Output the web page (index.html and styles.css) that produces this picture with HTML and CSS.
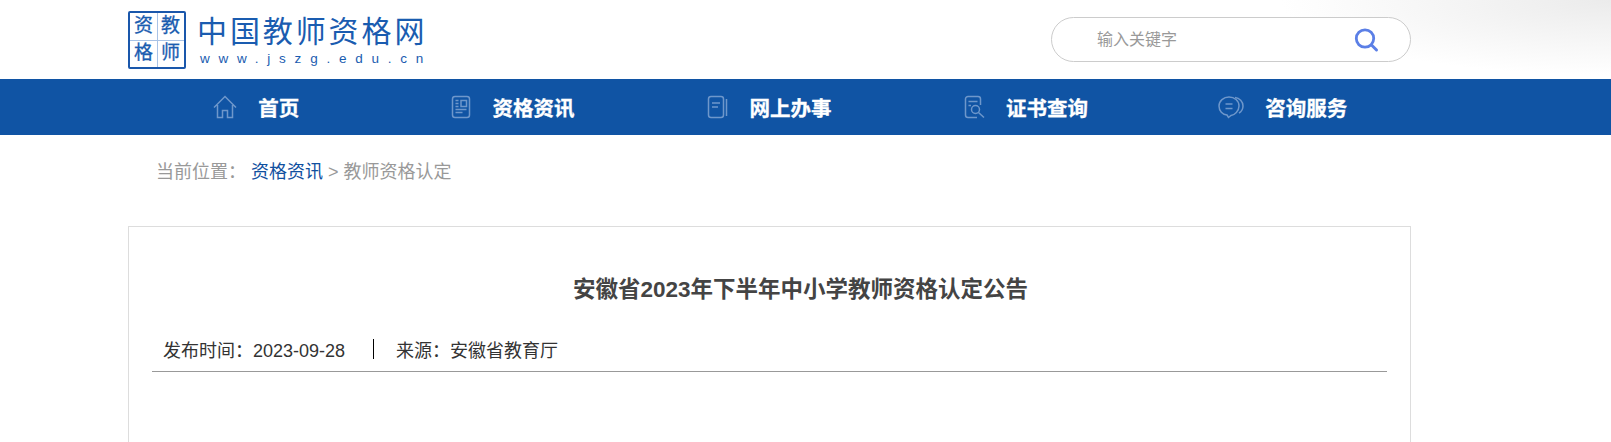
FILE: index.html
```html
<!DOCTYPE html>
<html lang="zh-CN">
<head>
    <meta charset="UTF-8">
    <title>安徽省2023年下半年中小学教师资格认定公告</title>
    <link rel="stylesheet" href="styles.css">
</head>
<body>
    <header class="cabecera">
        <div class="contenedor cabecera-fila">
            <a class="logo" href="#">
                <div class="logo-sello">
                    <span>资</span><span>教</span><span>格</span><span>师</span>
                </div>
                <div class="logo-texto">
                    <div class="logo-nombre">中国教师资格网</div>
                    <div class="logo-url">www.jszg.edu.cn</div>
                </div>
            </a>
            <form class="buscador">
                <input class="buscador-campo" type="text" placeholder="输入关键字">
                <svg class="buscador-icono" width="26" height="26" viewBox="0 0 26 26" fill="none" stroke="#5b7fe6">
                    <circle cx="12" cy="11.5" r="8.7" stroke-width="2.8"/>
                    <path d="M18.5 18l5 5" stroke-width="3" stroke-linecap="round"/>
                </svg>
            </form>
        </div>
    </header>

    <nav class="menu">
        <div class="contenedor menu-fila">
            <a class="menu-item" href="#">
                <svg class="menu-icono" width="24" height="24" viewBox="0 0 24 24">
                    <path d="M1 12.5 12 1.5l11 11M4.500 10v12.500h5V15.500h5v7h5V10"/>
                </svg>
                首页
            </a>
            <a class="menu-item" href="#">
                <svg class="menu-icono" width="20" height="24" viewBox="0 0 20 24">
                    <rect x="1.500" y="1.500" width="17" height="21" rx="2.500"/>
                    <path d="M4.500 5.500h3M4.500 8.500h3M4.500 11.500h3M4.500 14.500h11M4.500 17.500h7M10 5.500h5.500v6H10z"/>
                </svg>
                资格资讯
            </a>
            <a class="menu-item" href="#">
                <svg class="menu-icono" width="21" height="24" viewBox="0 0 21 24">
                    <rect x="1.500" y="1.500" width="15" height="21" rx="2.500"/>
                    <path d="M5 8h8M5 12h6M19.500 4v17"/>
                </svg>
                网上办事
            </a>
            <a class="menu-item" href="#">
                <svg class="menu-icono" width="21" height="24" viewBox="0 0 21 24">
                    <path d="M16.500 10V4A2.500 2.500 0 0 0 14 1.500H4A2.500 2.500 0 0 0 1.500 4v16A2.500 2.500 0 0 0 4 22.500h9M4.500 6.500h9M4.500 10.500h2.500"/>
                    <circle cx="11.500" cy="14.500" r="4"/>
                    <path d="m14.500 17.500 5.500 5"/>
                </svg>
                证书查询
            </a>
            <a class="menu-item" href="#">
                <svg class="menu-icono" width="26" height="24" viewBox="0 0 26 24">
                    <path d="M11 2c5.500 0 10 3.800 10 9s-4.500 9-8 9.500l-2.500 2-1.500-2.500C4.500 19.500 1 16 1 11s4.500-9 10-9z"/>
                    <path d="M17 2.500c4.500.5 8 4 8 8.500 0 3-1.500 5.500-4 7M7.500 9h7M7.500 13.500h7"/>
                </svg>
                咨询服务
            </a>
        </div>
    </nav>

    <div class="contenedor">
        <div class="migas">
            当前位置：<a class="migas-enlace" href="#">资格资讯</a> &gt; 教师资格认定
        </div>

        <article class="tarjeta">
            <h1 class="titulo">安徽省2023年下半年中小学教师资格认定公告</h1>
            <div class="datos">
                <span class="datos-fecha">发布时间：2023-09-28</span>
                <span class="datos-fuente">来源：安徽省教育厅</span>
            </div>
        </article>
    </div>
</body>
</html>
```

FILE: styles.css
```css
html {
    overflow: hidden;
}

body {
    font-family: "Liberation Sans", "Noto Sans CJK SC", sans-serif;
    margin: 0;
    height: 442px;
    overflow: hidden;
    background-color: #fff;
}

a {
    text-decoration: none;
}

.contenedor {
    width: 1283px;
    margin-left: 128px;
}

/* Cabecera */
.cabecera {
    height: 79px;
    background: radial-gradient(ellipse 330px 75px at 100% 0, #ebebeb 0%, #f4f4f4 45%, #fff 100%);
}

.cabecera-fila {
    display: flex;
    justify-content: space-between;
    align-items: flex-start;
}

.logo {
    display: flex;
    gap: 11px;
    padding-top: 11px;
    color: #1a5cb0;
}

.logo-sello {
    width: 58px;
    height: 58px;
    box-sizing: border-box;
    display: grid;
    grid-template-columns: 1fr 1fr;
    grid-template-rows: 1fr 1fr;
    border: 2px solid #1a57ab;
    border-radius: 2px;
    background: linear-gradient(#a9c3e6, #a9c3e6) 50% 0 / 1px 100% no-repeat,
                linear-gradient(#a9c3e6, #a9c3e6) 0 50% / 100% 1px no-repeat;
}

.logo-sello span {
    font-size: 19px;
    line-height: 26px;
    text-align: center;
    -webkit-text-stroke: 0.3px #1a5cb0;
}

.logo-nombre {
    font-family: "Noto Sans CJK SC", sans-serif;
    font-size: 30px;
    line-height: 36px;
    height: 36px;
    letter-spacing: 2.900px;
}

.logo-url {
    font-size: 13.500px;
    line-height: 16px;
    letter-spacing: 8.770px;
    margin-left: 3px;
    margin-top: 4px;
    white-space: nowrap;
}

.buscador {
    position: relative;
    margin: 17px 0 0;
}

.buscador-campo {
    display: block;
    width: 360px;
    height: 45px;
    box-sizing: border-box;
    padding: 0 60px 0 45px;
    border: 1px solid #ccc;
    border-radius: 23px;
    background: #fff;
    font-family: inherit;
    font-size: 16px;
    outline: none;
}

.buscador-campo::placeholder {
    color: #999;
}

.buscador-icono {
    position: absolute;
    top: 10px;
    right: 32px;
}

/* Menu */
.menu {
    height: 56px;
    background-color: #1054a4;
}

.menu-fila {
    display: grid;
    grid-template-columns: repeat(5, 1fr);
    height: 56px;
}

.menu-item {
    display: flex;
    align-items: center;
    justify-content: center;
    gap: 21px;
    color: #fff;
    font-size: 20.500px;
    font-weight: bold;
    -webkit-text-stroke: 0.3px #fff;
}

.menu-icono {
    fill: none;
    stroke: #6e97cb;
    stroke-width: 1.500;
}

/* Contenido */
.migas {
    padding: 25px 0 0 28px;
    height: 66px;
    font-size: 18px;
    line-height: 24px;
    color: #999;
}

.migas-enlace {
    color: #10509f;
    margin-left: 5px;
}

.tarjeta {
    height: 400px;
    padding: 0 23px;
    border: 1px solid #ddd;
}

.titulo {
    margin: 0;
    padding: 47px 0 0 62px;
    font-size: 22.500px;
    line-height: 32px;
    font-weight: bold;
    color: #444;
    text-align: center;
}

.datos {
    margin-top: 33px;
    height: 32px;
    padding-left: 11px;
    border-bottom: 1px solid #999;
    font-size: 18px;
    line-height: 24px;
    color: #333;
    display: flex;
    align-items: flex-start;
}

.datos-fecha {
    padding-right: 28px;
    border-right: 1px solid #000;
    height: 20px;
}

.datos-fuente {
    padding-left: 22px;
}
```
